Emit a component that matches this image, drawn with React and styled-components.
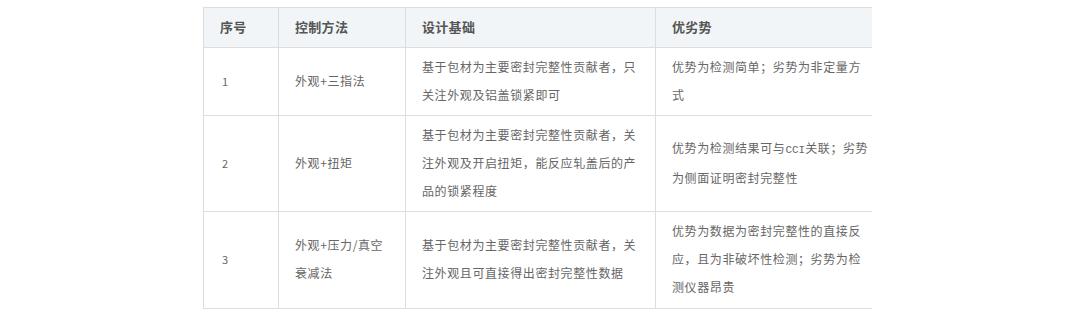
import React from "react";
import styled, { createGlobalStyle } from "styled-components";

const Global = createGlobalStyle`
  html, body { margin: 0; padding: 0; background: #fff; }
  body { font-family: "Noto Sans CJK SC", "Liberation Sans", sans-serif; }
`;

const Page = styled.div`
  padding: 7px 0 0 203px;
`;

const Clip = styled.div`
  width: 669px;
  overflow: hidden;
`;

const Table = styled.table`
  border-collapse: collapse;
  table-layout: fixed;
  width: 683px;
  font-size: 12px;
  letter-spacing: 0.6px;
  color: #666;
`;

const Th = styled.th`
  background: #f1f5f8;
  border: 1px solid #dddddd;
  color: #555;
  font-weight: bold;
  font-size: 13px;
  letter-spacing: 0.3px;
  text-align: left;
  line-height: 28px;
  padding: 5px 16px 6px;
`;

const Td = styled.td`
  border: 1px solid #dddddd;
  text-align: left;
  vertical-align: middle;
  line-height: 28px;
  padding: ${(p) => (p.$num ? "5px 16px 6px 18px" : "5px 16px 6px")};
  padding-bottom: ${(p) => (p.$last ? "7px" : "6px")};
  font-size: ${(p) => (p.$num ? "11px" : "12px")};
  word-break: break-all;
`;

const Latin = styled.span`
  font-family: "Liberation Mono", monospace;
  font-size: 11px;
  letter-spacing: 0;
`;

const rows = [
  {
    n: "1",
    m: "外观+三指法",
    b: "基于包材为主要密封完整性贡献者，只关注外观及铝盖锁紧即可",
    a: "优势为检测简单；劣势为非定量方式",
  },
  {
    n: "2",
    m: "外观+扭矩",
    b: "基于包材为主要密封完整性贡献者，关注外观及开启扭矩，能反应轧盖后的产品的锁紧程度",
    a: (
      <>
        优势为检测结果可与<Latin>CCI</Latin>关联；劣势为侧面证明密封完整性
      </>
    ),
  },
  {
    n: "3",
    m: "外观+压力/真空衰减法",
    b: "基于包材为主要密封完整性贡献者，关注外观且可直接得出密封完整性数据",
    a: "优势为数据为密封完整性的直接反应，且为非破坏性检测；劣势为检测仪器昂贵",
  },
];

export default function App() {
  return (
    <>
      <Global />
      <Page>
        <Clip>
          <Table>
            <colgroup>
              <col style={{ width: 75 }} />
              <col style={{ width: 127 }} />
              <col style={{ width: 250 }} />
              <col style={{ width: 231 }} />
            </colgroup>
            <thead>
              <tr>
                <Th>序号</Th>
                <Th>控制方法</Th>
                <Th>设计基础</Th>
                <Th>优劣势</Th>
              </tr>
            </thead>
            <tbody>
              {rows.map((r, i) => {
                const last = i === rows.length - 1;
                return (
                  <tr key={r.n}>
                    <Td $num $last={last}>{r.n}</Td>
                    <Td $last={last}>{r.m}</Td>
                    <Td $last={last}>{r.b}</Td>
                    <Td $last={last}>{r.a}</Td>
                  </tr>
                );
              })}
            </tbody>
          </Table>
        </Clip>
      </Page>
    </>
  );
}
